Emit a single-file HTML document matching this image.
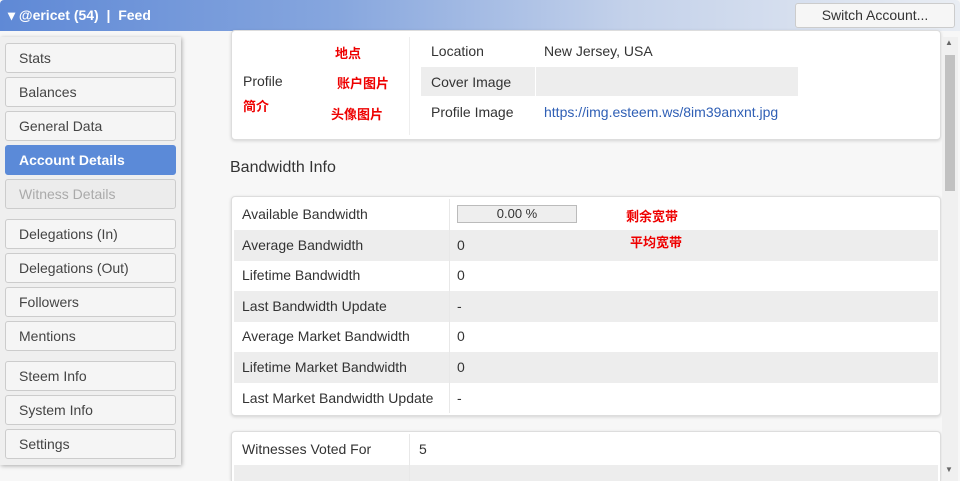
<!DOCTYPE html>
<html><head><meta charset="utf-8"><style>
*{box-sizing:border-box;margin:0;padding:0}
html{overflow:hidden;width:960px;height:481px}
body{width:960px;height:481px;overflow:hidden;background:#f7f7f7;font-family:"Liberation Sans","Noto Sans CJK SC",sans-serif;font-size:14px;color:#333;position:relative}
.abs{position:absolute}
.hdr{left:0;top:0;width:960px;height:31px;background:linear-gradient(90deg,#5f89d6 0%,#86a6de 35%,#c3d1ea 65%,#e9edf3 100%);border-radius:4px 4px 0 0}
.hdr .t{left:8px;top:7px;color:#fff;font-weight:bold;font-size:14px}
.sw{left:795px;top:3px;width:160px;height:25px;background:#f6f6f6;border:1px solid #ccc;border-radius:3px;text-align:center;line-height:23px;color:#333}
.side{left:0;top:37px;width:181px;height:428px;background:#efefef;box-shadow:1px 1px 4px rgba(0,0,0,.3)}
.btn{left:5px;width:171px;height:30px;background:#f5f5f5;border:1px solid #ccc;border-radius:3px;padding-left:13px;line-height:28px;color:#444}
.act{background:#5b8ad8;border-color:#5b8ad8;color:#fff;font-weight:bold}
.dis{color:#aaa;background:#ececec}
.card{background:#fff;border:1px solid #ddd;border-radius:4px;box-shadow:0 1px 3px rgba(0,0,0,.15)}
.row{left:234px;width:704px;height:31px;line-height:31px}
.row span{position:absolute}
.g{background:#ededed}
.red{color:#e00;font-weight:bold;font-size:13px}
a{color:#2f5fb5;text-decoration:none}
</style></head><body>
<div class="abs hdr"><div class="abs t">▾ @ericet (54) &nbsp;| &nbsp;Feed</div></div>
<div class="abs sw">Switch Account...</div>
<div class="abs side"></div>
<div class="abs btn" style="top:43px">Stats</div>
<div class="abs btn" style="top:77px">Balances</div>
<div class="abs btn" style="top:111px">General Data</div>
<div class="abs btn act" style="top:145px">Account Details</div>
<div class="abs btn dis" style="top:179px">Witness Details</div>
<div class="abs btn" style="top:219px">Delegations (In)</div>
<div class="abs btn" style="top:253px">Delegations (Out)</div>
<div class="abs btn" style="top:287px">Followers</div>
<div class="abs btn" style="top:321px">Mentions</div>
<div class="abs btn" style="top:361px">Steem Info</div>
<div class="abs btn" style="top:395px">System Info</div>
<div class="abs btn" style="top:429px">Settings</div>

<div class="abs card" style="left:231px;top:30px;width:710px;height:110px"></div>
<div class="abs" style="left:409px;top:37px;width:1px;height:98px;background:#eee"></div>
<div class="abs" style="left:243px;top:73px">Profile</div>
<div class="abs red" style="left:243px;top:96px">简介</div>
<div class="abs red" style="left:335px;top:43px">地点</div>
<div class="abs red" style="left:337px;top:73px">账户图片</div>
<div class="abs red" style="left:331px;top:104px">头像图片</div>
<div class="abs" style="left:431px;top:43px">Location</div>
<div class="abs" style="left:544px;top:43px">New Jersey, USA</div>
<div class="abs g" style="left:421px;top:67px;width:377px;height:29px"></div>
<div class="abs" style="left:535px;top:67px;width:1px;height:29px;background:#fff"></div>
<div class="abs" style="left:431px;top:74px">Cover Image</div>
<div class="abs" style="left:431px;top:104px">Profile Image</div>
<div class="abs" style="left:544px;top:104px"><a>https://img.esteem.ws/8im39anxnt.jpg</a></div>

<div class="abs" style="left:230px;top:159px;font-size:16px">Bandwidth Info</div>
<div class="abs card" style="left:231px;top:196px;width:710px;height:220px"></div>
<div class="abs row" style="top:199px"><span style="left:8px">Available Bandwidth</span><span style="left:223px;top:6px;width:120px;height:18px;border:1px solid #bbb;background:#eee;line-height:16px;text-align:center;font-size:13px">0.00 %</span></div>
<div class="abs row g" style="top:230px"><span style="left:8px">Average Bandwidth</span><span style="left:223px">0</span></div>
<div class="abs row" style="top:260px"><span style="left:8px">Lifetime Bandwidth</span><span style="left:223px">0</span></div>
<div class="abs row g" style="top:291px"><span style="left:8px">Last Bandwidth Update</span><span style="left:223px">-</span></div>
<div class="abs row" style="top:321px"><span style="left:8px">Average Market Bandwidth</span><span style="left:223px">0</span></div>
<div class="abs row g" style="top:352px"><span style="left:8px">Lifetime Market Bandwidth</span><span style="left:223px">0</span></div>
<div class="abs row" style="top:383px"><span style="left:8px">Last Market Bandwidth Update</span><span style="left:223px">-</span></div>
<div class="abs" style="left:449px;top:199px;width:1px;height:214px;background:#e8e8e8"></div>
<div class="abs red" style="left:626px;top:206px">剩余宽带</div>
<div class="abs red" style="left:630px;top:232px">平均宽带</div>

<div class="abs card" style="left:231px;top:431px;width:710px;height:50px;border-bottom:none;border-radius:4px 4px 0 0"></div>
<div class="abs row" style="top:434px"><span style="left:8px">Witnesses Voted For</span><span style="left:185px">5</span></div>
<div class="abs g" style="left:234px;top:465px;width:704px;height:16px"></div>
<div class="abs" style="left:409px;top:434px;width:1px;height:47px;background:#e8e8e8"></div>

<div class="abs" style="left:942px;top:37px;width:16px;height:444px;background:#f0f0f0"></div>
<div class="abs" style="left:945px;top:55px;width:10px;height:136px;background:#c1c1c1"></div>
<div class="abs" style="left:945px;top:38px;font-size:8px;color:#666">▲</div>
<div class="abs" style="left:945px;top:465px;font-size:8px;color:#666">▼</div>
</body></html>
